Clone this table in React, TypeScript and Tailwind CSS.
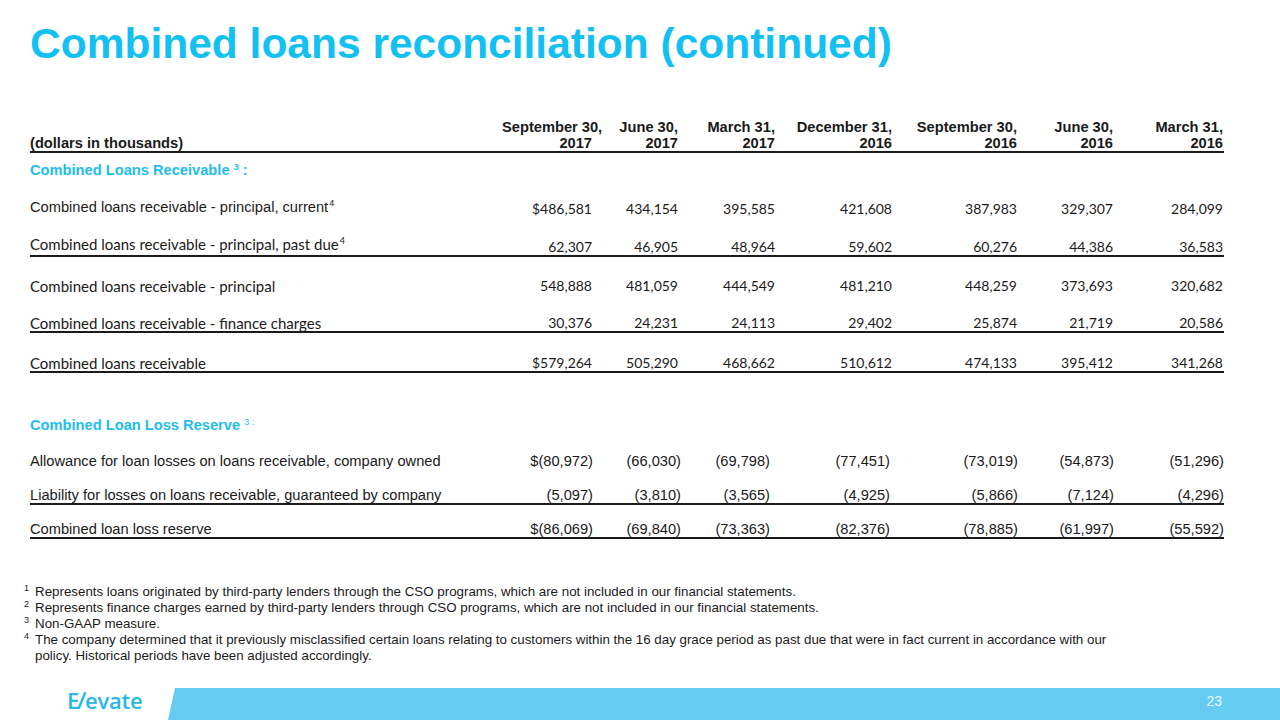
import React from "react";

const G1 = "grid grid-cols-[472px_90px_86px_97px_117px_125px_96px_110px] items-end";
const G2 = "grid grid-cols-[473px_90px_88px_89px_120px_128px_96px_110px] items-end";
const ARIAL = "font-['Liberation_Sans',Arial,sans-serif] text-[14.67px]";
const CAL = "font-['Lato',sans-serif] text-[14px]";
const CALL = "font-['Lato',sans-serif] text-[15px]";
const LINE = "border-b-2 border-[#1a1a1a]";

function Sup({ n }: { n: string }) {
  return <span className="relative -top-[6px] text-[9px] ml-[1px]">{n}</span>;
}

type RowProps = {
  grid: string;
  cls: string;
  label: React.ReactNode;
  labelFont: string;
  values: string[];
  valueFont: string;
};

function Row({ grid, cls, label, labelFont, values, valueFont }: RowProps) {
  return (
    <div className={`${grid} ${cls}`}>
      <div className={`${labelFont} leading-4 whitespace-nowrap`}>{label}</div>
      {values.map((v, i) => (
        <div key={i} className={`${valueFont} leading-4 text-right whitespace-nowrap`}>
          {v}
        </div>
      ))}
    </div>
  );
}

const headers: [string, string][] = [
  ["September 30,", "2017"],
  ["June 30,", "2017"],
  ["March 31,", "2017"],
  ["December 31,", "2016"],
  ["September 30,", "2016"],
  ["June 30,", "2016"],
  ["March 31,", "2016"],
];

export default function App() {
  return (
    <div className="w-[1280px] h-[720px] overflow-hidden bg-white text-[#1a1a1a] flex flex-col">
      <div className="h-[119px] shrink-0 pl-[30px] pt-[20px]">
        <h1 className="font-['Liberation_Sans',Arial,sans-serif] font-bold text-[42.5px] leading-[48px] text-[#12c1f2] whitespace-nowrap">
          Combined loans reconciliation (continued)
        </h1>
      </div>

      <div className="w-[1194px] ml-[30px] flex flex-col shrink-0">
        <div className={`${G1} h-[34px] ${LINE}`}>
          <div className={`${ARIAL} font-bold leading-4`}>(dollars in thousands)</div>
          {headers.map(([a, b], i) => (
            <div key={i} className={`${ARIAL} font-bold leading-4 text-right whitespace-nowrap`}>
              {a}
              <br />
              {b}
            </div>
          ))}
        </div>

        <div className="h-[27px] flex items-end">
          <div className={`${ARIAL} font-bold leading-4 text-[#22bdee]`}>
            Combined Loans Receivable <span className="relative -top-[5px] text-[9px]">3</span> :
          </div>
        </div>

        <Row
          grid={G1}
          cls="h-[37px]"
          labelFont={ARIAL}
          valueFont={CAL}
          label={
            <>
              Combined loans receivable - principal, current<Sup n="4" />
            </>
          }
          values={["$486,581", "434,154", "395,585", "421,608", "387,983", "329,307", "284,099"]}
        />
        <Row
          grid={G1}
          cls={`h-[40px] ${LINE}`}
          labelFont={CALL}
          valueFont={CAL}
          label={
            <>
              Combined loans receivable - principal, past due<Sup n="4" />
            </>
          }
          values={["62,307", "46,905", "48,964", "59,602", "60,276", "44,386", "36,583"]}
        />
        <Row
          grid={G1}
          cls="h-[37px]"
          labelFont={CALL}
          valueFont={CAL}
          label="Combined loans receivable - principal"
          values={["548,888", "481,059", "444,549", "481,210", "448,259", "373,693", "320,682"]}
        />
        <Row
          grid={G1}
          cls={`h-[39px] ${LINE}`}
          labelFont={CALL}
          valueFont={CAL}
          label="Combined loans receivable - finance charges"
          values={["30,376", "24,231", "24,113", "29,402", "25,874", "21,719", "20,586"]}
        />
        <Row
          grid={G1}
          cls={`h-[40px] ${LINE}`}
          labelFont={CALL}
          valueFont={CAL}
          label="Combined loans receivable"
          values={["$579,264", "505,290", "468,662", "510,612", "474,133", "395,412", "341,268"]}
        />

        <div className="h-[62px] flex items-end">
          <div className={`${ARIAL} font-bold leading-4 text-[#22bdee]`}>
            Combined Loan Loss Reserve <span className="relative -top-[5px] text-[9px] font-normal">3 :</span>
          </div>
        </div>

        <Row
          grid={G2}
          cls="h-[34px]"
          labelFont={ARIAL}
          valueFont={ARIAL}
          label="Allowance for loan losses on loans receivable, company owned"
          values={["$(80,972)", "(66,030)", "(69,798)", "(77,451)", "(73,019)", "(54,873)", "(51,296)"]}
        />
        <Row
          grid={G2}
          cls={`h-[36px] ${LINE}`}
          labelFont={ARIAL}
          valueFont={ARIAL}
          label="Liability for losses on loans receivable, guaranteed by company"
          values={["(5,097)", "(3,810)", "(3,565)", "(4,925)", "(5,866)", "(7,124)", "(4,296)"]}
        />
        <Row
          grid={G2}
          cls={`h-[34px] ${LINE}`}
          labelFont={ARIAL}
          valueFont={ARIAL}
          label="Combined loan loss reserve"
          values={["$(86,069)", "(69,840)", "(73,363)", "(82,376)", "(78,885)", "(61,997)", "(55,592)"]}
        />
      </div>

      <div className="font-['Liberation_Sans',Arial,sans-serif] text-[13.33px] leading-4 ml-[24px] mt-[45px] shrink-0 flex flex-col">
        <div className="flex">
          <span className="w-[11px] shrink-0 relative -top-[4px] text-[9px]">1</span>
          <span className="whitespace-nowrap">
            Represents loans originated by third-party lenders through the CSO programs, which are not included in our
            financial statements.
          </span>
        </div>
        <div className="flex">
          <span className="w-[11px] shrink-0 relative -top-[4px] text-[9px]">2</span>
          <span className="whitespace-nowrap">
            Represents finance charges earned by third-party lenders through CSO programs, which are not included in our
            financial statements.
          </span>
        </div>
        <div className="flex">
          <span className="w-[11px] shrink-0 relative -top-[4px] text-[9px]">3</span>
          <span>Non-GAAP measure.</span>
        </div>
        <div className="flex">
          <span className="w-[11px] shrink-0 relative -top-[4px] text-[9px]">4</span>
          <span className="whitespace-nowrap">
            The company determined that it previously misclassified certain loans relating to customers within the 16 day
            grace period as past due that were in fact current in accordance with our
            <br />
            policy. Historical periods have been adjusted accordingly.
          </span>
        </div>
      </div>

      <div className="flex h-[32px] mt-[24px] shrink-0">
        <div className="w-[168px] shrink-0 pl-[67px]">
          <span className="font-['Open_Sans',sans-serif] font-semibold text-[22px] leading-[24px] text-[#2ab6e8] tracking-[-0.2px]">
            E<span className="inline-block skew-x-[-22deg]">l</span>evate
          </span>
        </div>
        <div className="flex-1 bg-[#65cbf0] [clip-path:polygon(7px_0,100%_0,100%_100%,0_100%)] flex justify-end pr-[58px] pt-[5px]">
          <span className="font-['Liberation_Sans',Arial,sans-serif] text-[14px] leading-4 text-[#eef9fe]">23</span>
        </div>
      </div>
    </div>
  );
}
